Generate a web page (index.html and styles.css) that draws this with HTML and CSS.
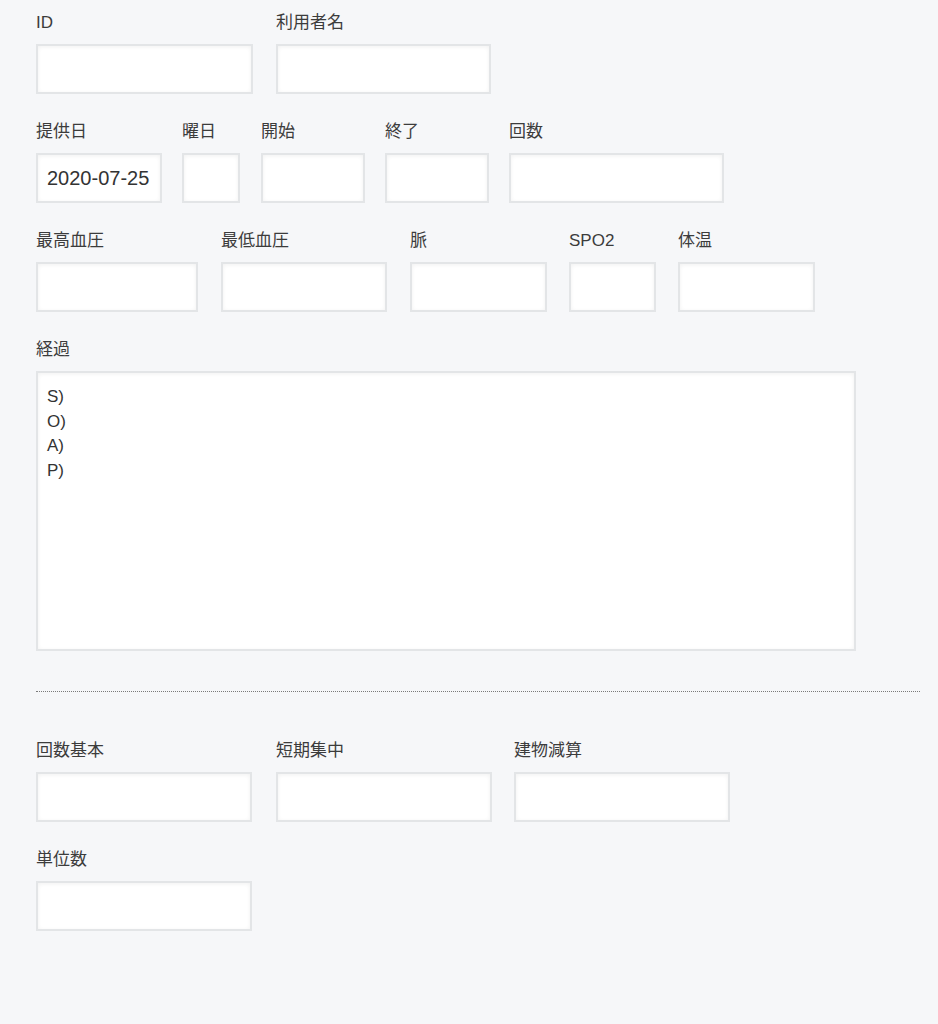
FILE: index.html
```html
<!DOCTYPE html>
<html lang="ja">
<head>
<meta charset="utf-8">
<link rel="stylesheet" href="styles.css">
</head>
<body>
<form class="form">
  <div class="row">
    <div class="field w217"><label>ID</label><input class="inp" type="text"></div>
    <div class="field w215"><label>利用者名</label><input class="inp" type="text"></div>
  </div>
  <div class="row">
    <div class="field w126"><label>提供日</label><input class="inp" type="text" value="2020-07-25"></div>
    <div class="field w58"><label>曜日</label><input class="inp" type="text"></div>
    <div class="field w104"><label>開始</label><input class="inp" type="text"></div>
    <div class="field w104"><label>終了</label><input class="inp" type="text"></div>
    <div class="field w215"><label>回数</label><input class="inp" type="text"></div>
  </div>
  <div class="row">
    <div class="field w162"><label>最高血圧</label><input class="inp" type="text"></div>
    <div class="field w166"><label>最低血圧</label><input class="inp" type="text"></div>
    <div class="field w137"><label>脈</label><input class="inp" type="text"></div>
    <div class="field w87"><label>SPO2</label><input class="inp" type="text"></div>
    <div class="field w137"><label>体温</label><input class="inp" type="text"></div>
  </div>
  <div class="row">
    <div class="field w820"><label>経過</label><textarea class="inp area">S)
O)
A)
P)</textarea></div>
  </div>
  <hr class="sep">
  <div class="row">
    <div class="field b1"><label>回数基本</label><input class="inp" type="text"></div>
    <div class="field b2"><label>短期集中</label><input class="inp" type="text"></div>
    <div class="field b3"><label>建物減算</label><input class="inp" type="text"></div>
  </div>
  <div class="row">
    <div class="field b1"><label>単位数</label><input class="inp" type="text"></div>
  </div>
</form>
</body>
</html>
```
FILE: styles.css
```css
html, body {
  margin: 0;
  padding: 0;
  background: #f6f7f9;
}
body {
  font-family: "Liberation Sans", "Noto Sans CJK JP", sans-serif;
  color: #3a3a3a;
}
.form {
  padding: 9px 18px 0 36px;
}
.row {
  display: flex;
  margin-bottom: 24px;
}
.field {
  display: flex;
  flex-direction: column;
  margin-right: 20px;
}
.field label {
  font-size: 17px;
  line-height: 24px;
  height: 24px;
  padding-top: 2px;
  margin-bottom: 9px;
  color: #3c3c3c;
}
.inp {
  box-sizing: border-box;
  height: 50px;
  width: 100%;
  margin: 0;
  border: 2px solid #e3e5e7;
  background: #fff;
  box-shadow: inset 0 1px 4px rgba(0, 0, 0, 0.06);
  font-family: "Liberation Sans", "Noto Sans CJK JP", sans-serif;
  font-size: 20px;
  color: #333;
  padding: 0 9px;
  outline: none;
}
.area {
  height: 280px;
  resize: none;
  font-size: 17px;
  line-height: 24.5px;
  padding: 12px 9px;
  overflow: hidden;
}
.w217 { width: 217px; margin-right: 23px; }
.w215 { width: 215px; margin-right: 23px; }
.w126 { width: 126px; }
.w58 { width: 58px; margin-right: 21px; }
.w104 { width: 104px; }
.w162 { width: 162px; margin-right: 23px; }
.w166 { width: 166px; margin-right: 23px; }
.w137 { width: 137px; margin-right: 22px; }
.w87 { width: 87px; margin-right: 22px; }
.w820 { width: 820px; }
.b1 { width: 216px; margin-right: 24px; }
.b2 { width: 216px; margin-right: 22px; }
.b3 { width: 216px; }
.sep {
  border: 0;
  border-top: 1px dotted #7a7a7a;
  height: 0;
  margin: 40px 0 45px 0;
}
```
